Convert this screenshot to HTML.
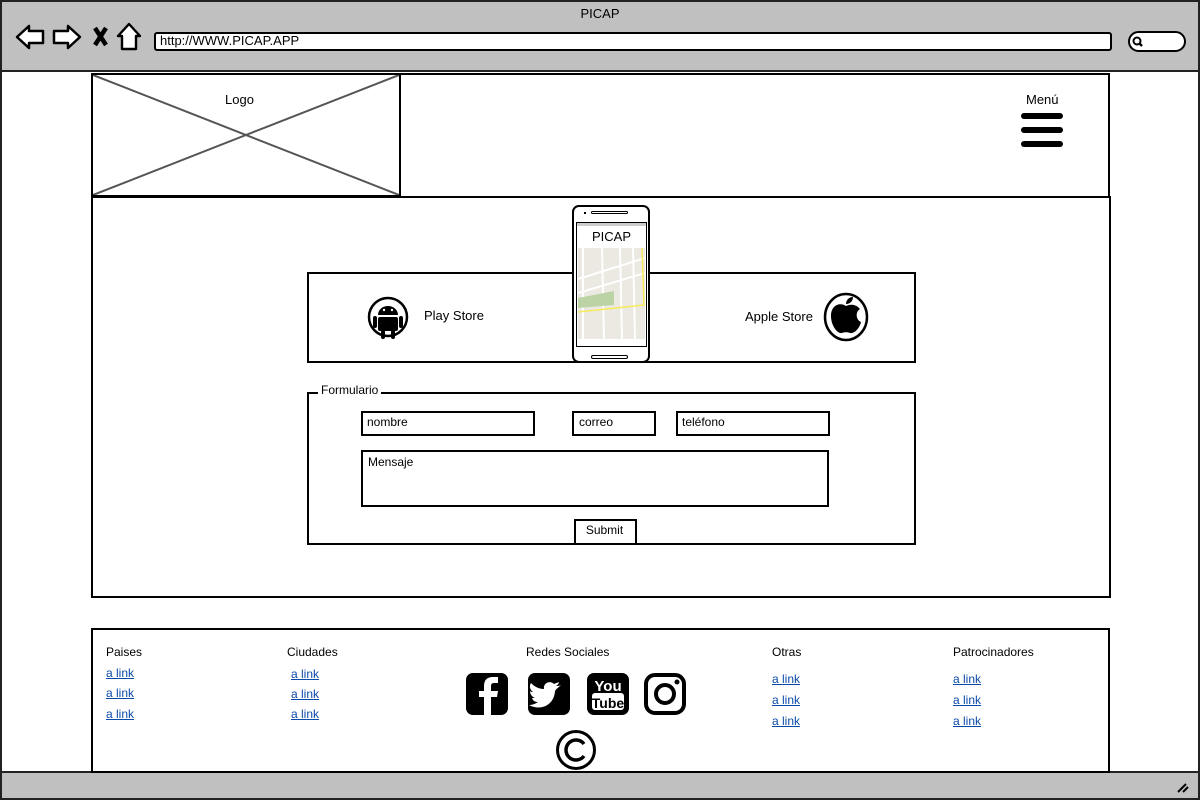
<!DOCTYPE html>
<html><head><meta charset="utf-8"><style>
*{margin:0;padding:0;box-sizing:border-box}
body{width:1200px;height:800px;position:relative;overflow:hidden;background:#fff;font-family:"Liberation Sans",sans-serif;font-size:12px;color:#000}
.a{position:absolute}
.b{position:absolute;border:2px solid #000;background:#fff}
.t{position:absolute;white-space:nowrap}
.l{position:absolute;color:#0b4aa8;text-decoration:underline;font-size:12px}
</style></head><body>
<div class="a" style="left:0;top:0;width:1200px;height:800px;border:2px solid #222"></div>
<div class="a" style="left:2px;top:2px;width:1196px;height:70px;background:#c0c0c0;border-bottom:2px solid #222"></div>
<div class="t" style="left:0;width:1200px;text-align:center;top:6px;font-size:13px">PICAP</div>
<svg class="a" style="left:14px;top:22px" width="130" height="30" viewBox="0 0 130 30">
<path d="M3 15 L15 4 L15 9 L29 9 L29 21 L15 21 L15 26 Z" fill="#fff" stroke="#000" stroke-width="2.5" stroke-linejoin="round"/>
<path d="M66 15 L54 4 L54 9 L40 9 L40 21 L54 21 L54 26 Z" fill="#fff" stroke="#000" stroke-width="2.5" stroke-linejoin="round"/>
<path d="M81 6 L92 23 M92 6 L81 23" stroke="#000" stroke-width="4.5"/>
<path d="M115 2 L104 14 L108 14 L108 27 L122 27 L122 14 L126 14 Z" fill="#fff" stroke="#000" stroke-width="2.4" stroke-linejoin="round"/>
</svg>
<div class="a" style="left:154px;top:32px;width:958px;height:19px;background:#fff;border:2px solid #000;border-radius:3px"></div>
<div class="t" style="left:160px;top:33px;font-size:13px">http://WWW.PICAP.APP</div>
<div class="a" style="left:1128px;top:31px;width:58px;height:21px;background:#fff;border:2px solid #000;border-radius:12px"></div>
<svg class="a" style="left:1131px;top:35px" width="14" height="14"><circle cx="6" cy="6" r="3.5" fill="none" stroke="#000" stroke-width="2"/><path d="M8 8 L11 11" stroke="#000" stroke-width="2.5"/></svg>
<div class="a" style="left:2px;top:771px;width:1196px;height:27px;background:#c0c0c0;border-top:2px solid #222"></div>
<svg class="a" style="left:1176px;top:780px" width="14" height="14"><path d="M2 12 L10 4 M7 12 L12 7" stroke="#000" stroke-width="2"/></svg>

<div class="b" style="left:91px;top:73px;width:1019px;height:125px"></div>
<div class="b" style="left:91px;top:73px;width:310px;height:124px"></div>
<svg class="a" style="left:93px;top:75px" width="306" height="120"><path d="M0 0 L306 120 M306 0 L0 120" stroke="#555" stroke-width="2"/></svg>
<div class="t" style="left:225px;top:92px;font-size:13px">Logo</div>
<div class="t" style="left:1026px;top:92px;font-size:13px">Menú</div>
<div class="a" style="left:1021px;top:113px;width:42px;height:6px;background:#000;border-radius:3px"></div>
<div class="a" style="left:1021px;top:127px;width:42px;height:6px;background:#000;border-radius:3px"></div>
<div class="a" style="left:1021px;top:141px;width:42px;height:6px;background:#000;border-radius:3px"></div>

<div class="b" style="left:91px;top:196px;width:1020px;height:402px"></div>
<div class="b" style="left:307px;top:272px;width:609px;height:91px"></div>
<svg class="a" style="left:367px;top:295px" width="44" height="46">
<circle cx="21" cy="22" r="19" fill="#fff" stroke="#000" stroke-width="2.5"/>
<path d="M11 20 A10 9 0 0 1 31 20 Z" fill="#000"/>
<rect x="11" y="22" width="20" height="14" rx="2" fill="#000"/>
<rect x="6" y="21" width="4" height="12" rx="2" fill="#000"/><rect x="32" y="21" width="4" height="12" rx="2" fill="#000"/>
<rect x="14" y="35" width="4" height="9" rx="2" fill="#000"/><rect x="24" y="35" width="4" height="9" rx="2" fill="#000"/>
<circle cx="17" cy="15" r="1.2" fill="#fff"/><circle cx="25" cy="15" r="1.2" fill="#fff"/>
</svg>
<div class="t" style="left:424px;top:308px;font-size:13px">Play Store</div>
<div class="t" style="left:745px;top:309px;font-size:13px">Apple Store</div>
<svg class="a" style="left:822px;top:292px" width="48" height="50">
<ellipse cx="24" cy="25" rx="21" ry="23" fill="#fff" stroke="#000" stroke-width="2.5"/>
<path d="M24 14 C18 10 9 13 9 24 C9 33 15 42 20 41 C22 40 26 40 28 41 C33 42 38 35 39 30 C34 28 33 20 38 17 C34 12 28 12 24 14 Z" fill="#000"/>
<path d="M24 12 C24 8 27 5 31 5 C31 9 28 12 24 12 Z" fill="#000"/>
</svg>
<div class="a" style="left:572px;top:205px;width:78px;height:158px;border:2px solid #000;border-radius:7px;background:#fff"></div>
<div class="a" style="left:591px;top:211px;width:37px;height:3px;border:1px solid #000;border-radius:2px"></div>
<div class="a" style="left:584px;top:212px;width:2px;height:2px;background:#000"></div>
<div class="a" style="left:591px;top:355px;width:37px;height:4px;border:1px solid #000;border-radius:2px"></div>
<div class="a" style="left:576px;top:222px;width:71px;height:125px;border:1px solid #000;background:#fff"></div>
<div class="a" style="left:577px;top:223px;width:69px;height:3px;background:#ccc"></div>
<div class="t" style="left:577px;width:69px;text-align:center;top:229px;font-size:13px">PICAP</div>
<svg class="a" style="left:578px;top:248px" width="67" height="91">
<rect width="67" height="91" fill="#ebe9e2"/>
<path d="M0 31 L67 10 M0 45 L67 25 M0 58 L35 50 M42 0 L44 91 M24 0 L26 91 M55 0 L57 91 M5 0 L5 91" stroke="#fff" stroke-width="2"/>
<path d="M0 50 L36 43 L36 57 L0 60 Z" fill="#bcd3a6"/>
<path d="M0 64 L66 57 L64 0" stroke="#f6ea5a" stroke-width="1.5" fill="none"/>
</svg>

<div class="a" style="left:307px;top:392px;width:609px;height:153px;border:2px solid #000"></div>
<div class="t" style="left:318px;top:383px;background:#fff;padding:0 3px;font-size:12px">Formulario</div>
<div class="b" style="left:361px;top:411px;width:174px;height:25px"></div>
<div class="t" style="left:367px;top:415px;font-size:12px">nombre</div>
<div class="b" style="left:572px;top:411px;width:84px;height:25px"></div>
<div class="t" style="left:579px;top:415px;font-size:12px">correo</div>
<div class="b" style="left:676px;top:411px;width:154px;height:25px"></div>
<div class="t" style="left:682px;top:415px;font-size:12px">teléfono</div>
<div class="b" style="left:361px;top:450px;width:468px;height:57px"></div>
<div class="t" style="left:368px;top:455px;font-size:12px">Mensaje</div>
<div class="b" style="left:574px;top:519px;width:63px;height:26px"></div>
<div class="t" style="left:574px;width:61px;text-align:center;top:523px;font-size:12px">Submit</div>

<div class="b" style="left:91px;top:628px;width:1019px;height:145px"></div>
<div class="t" style="left:106px;top:645px;font-size:12px">Paises</div>
<div class="l" style="left:106px;top:666px">a link</div>
<div class="l" style="left:106px;top:686px">a link</div>
<div class="l" style="left:106px;top:707px">a link</div>
<div class="t" style="left:287px;top:645px;font-size:12px">Ciudades</div>
<div class="l" style="left:291px;top:667px">a link</div>
<div class="l" style="left:291px;top:687px">a link</div>
<div class="l" style="left:291px;top:707px">a link</div>
<div class="t" style="left:526px;top:645px;font-size:12px">Redes Sociales</div>
<div class="t" style="left:772px;top:645px;font-size:12px">Otras</div>
<div class="l" style="left:772px;top:672px">a link</div>
<div class="l" style="left:772px;top:693px">a link</div>
<div class="l" style="left:772px;top:714px">a link</div>
<div class="t" style="left:953px;top:645px;font-size:12px">Patrocinadores</div>
<div class="l" style="left:953px;top:672px">a link</div>
<div class="l" style="left:953px;top:693px">a link</div>
<div class="l" style="left:953px;top:714px">a link</div>
<svg class="a" style="left:464px;top:671px" width="226" height="46">
<rect x="2" y="2" width="42" height="42" rx="7" fill="#000"/>
<path d="M27 44 L27 26 L33 26 L34 20 L27 20 L27 15 C27 13 28 12 30 12 L34 12 L34 6 L29 6 C23 6 20 9 20 15 L20 20 L15 20 L15 26 L20 26 L20 44 Z" fill="#fff"/>
<rect x="64" y="2" width="42" height="42" rx="7" fill="#000"/>
<path d="M97 14 C95 15 94 15 92 15 C94 14 95 12 95 11 C93 12 92 12 90 13 C86 9 79 12 80 18 C74 18 70 15 67 12 C65 15 66 19 69 21 C68 21 67 21 66 20 C66 23 68 26 71 27 C70 27 69 27 68 27 C69 30 71 31 74 31 C71 33 68 34 65 34 C76 40 90 35 91 20 C92 18 94 17 97 14 Z" fill="#fff"/>
<rect x="123" y="2" width="42" height="42" rx="7" fill="#000"/>
<text x="144" y="20" font-family="Liberation Sans Narrow,Liberation Sans,sans-serif" font-size="15" font-weight="bold" fill="#fff" text-anchor="middle">You</text>
<rect x="128" y="22" width="32" height="17" rx="3" fill="#fff"/>
<text x="144" y="37" font-family="Liberation Sans Narrow,Liberation Sans,sans-serif" font-size="14" font-weight="bold" fill="#000" text-anchor="middle">Tube</text>
<rect x="182" y="4" width="38" height="38" rx="9" fill="none" stroke="#000" stroke-width="4"/>
<circle cx="201" cy="23" r="9" fill="none" stroke="#000" stroke-width="4"/>
<circle cx="213" cy="11" r="2.5" fill="#000"/>
</svg>
<svg class="a" style="left:555px;top:729px" width="42" height="42">
<circle cx="21" cy="21" r="18.5" fill="none" stroke="#000" stroke-width="3"/>
<path d="M29 15 A10 10 0 1 0 29 27" fill="none" stroke="#000" stroke-width="3.5"/>
</svg>
</body></html>
